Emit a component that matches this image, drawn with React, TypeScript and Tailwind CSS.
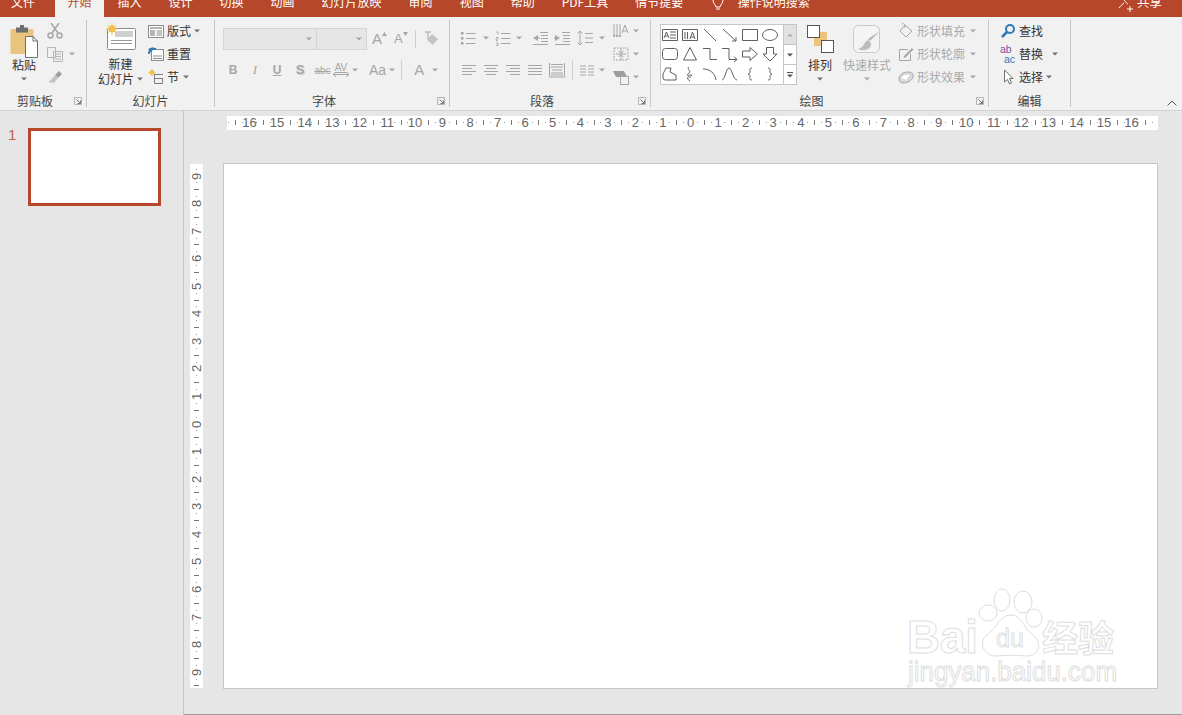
import type { ReactNode } from 'react'

const tabs = ['插入', '设计', '切换', '动画', '幻灯片放映', '审阅', '视图', '帮助', 'PDF工具', '情节提要']
const off = '#a6a6a6'

function Caret({ color = '#707070', className = '' }: { color?: string; className?: string }) {
  return (
    <svg width="6" height="4" viewBox="0 0 6 4" className={`shrink-0 ${className}`}>
      <path d="M0 0.5h6L3 3.5z" fill={color} />
    </svg>
  )
}

function Icon({ children, w = 16, h = 16, className = '' }: { children: ReactNode; w?: number; h?: number; className?: string }) {
  return (
    <svg width={w} height={h} viewBox={`0 0 ${w} ${h}`} fill="none" className={`shrink-0 ${className}`}>
      {children}
    </svg>
  )
}

function Launcher() {
  return (
    <div className="flex w-[16px] justify-center">
      <svg width="8" height="8" viewBox="0 0 8 8" fill="none">
        <path d="M0.5 7.5V0.5H7.5V7.5H0.5z" stroke="#b5b5b5" />
        <path d="M2.5 2.5L6.5 6.5M6.5 3.5V6.5H3.5" stroke="#777" />
      </svg>
    </div>
  )
}

function Group({ w, label, launcher, children }: { w: string; label: string; launcher?: boolean; children: ReactNode }) {
  return (
    <div className={`flex h-full shrink-0 ${w}`}>
      <div className="flex min-w-0 flex-1 flex-col">
        <div className="flex h-[75px]">{children}</div>
        <div className="flex h-[18px] items-center">
          <div className="flex-1 text-center text-[12px] leading-[18px] text-[#444]">{label}</div>
          {launcher && <Launcher />}
        </div>
      </div>
      <div className="mt-[3px] h-[87px] w-px bg-[#c6c6c6]" />
    </div>
  )
}

function Row({ children, className = '' }: { children: ReactNode; className?: string }) {
  return <div className={`flex h-[23px] items-center text-[12px] ${className}`}>{children}</div>
}

function Lines({ d }: { d: string }) {
  return <path d={d} stroke={off} />
}

function Paste() {
  return (
    <Icon w={28} h={33}>
      <rect x="0.5" y="4" width="23" height="25" rx="1.5" fill="#e9c47f" />
      <rect x="6" y="2.5" width="12" height="5" fill="#6f6f6f" />
      <rect x="10" y="0" width="4" height="4" fill="#6f6f6f" />
      <path d="M15.5 11.5H23L27.5 16V32.5H15.5z" fill="#fff" stroke="#6f6f6f" />
      <path d="M23 11.5V16H27.5" stroke="#6f6f6f" />
    </Icon>
  )
}

function NewSlide() {
  return (
    <Icon w={30} h={27}>
      <rect x="1.5" y="5.5" width="28" height="21" rx="1" fill="#fff" stroke="#8a8a8a" />
      <rect x="9" y="8" width="18" height="6" fill="#cfcfcf" />
      <path d="M5 17.5H26M5 20.5H26" stroke="#9a9a9a" />
      <circle cx="6" cy="6" r="3.5" fill="#f1c04d" />
      <path d="M6 0V12M0 6H12M2 2L10 10M10 2L2 10" stroke="#f1c04d" />
    </Icon>
  )
}

function Layout() {
  return (
    <Icon>
      <rect x="0.5" y="2.5" width="15" height="12" fill="#fff" stroke="#8a8a8a" />
      <rect x="2" y="4" width="12" height="2" fill="#b5b5b5" />
      <rect x="2" y="7" width="5" height="6" fill="#b5b5b5" />
      <path d="M8.5 8H14M8.5 10H14M8.5 12H14" stroke="#8a8a8a" />
    </Icon>
  )
}

function Reset() {
  return (
    <Icon>
      <rect x="3.5" y="3.5" width="12" height="11" fill="#fff" stroke="#8a8a8a" />
      <path d="M5 10H14M5 12.5H14" stroke="#8a8a8a" />
      <path d="M1 8C1 4 4 2 8 3" stroke="#2b79b8" strokeWidth="2" />
      <path d="M0 3L5 1L4 6z" fill="#2b79b8" />
    </Icon>
  )
}

function Section() {
  return (
    <Icon>
      <circle cx="4" cy="3.5" r="2.5" fill="#f1c04d" />
      <path d="M4 0V7M0.5 3.5H7.5" stroke="#f1c04d" />
      <path d="M6 5.5H15M6 9.5H15M6.5 5.5V14.5H14.5V9.5" stroke="#7d7d7d" />
    </Icon>
  )
}

function BulletIcon({ numbered }: { numbered?: boolean }) {
  return (
    <Icon>
      {numbered ? (
        <path d="M1 2h2v3M1 7.5h2v1.5h-2v1.5h2M1 13h2v1h-1M3 14v1.5H1" stroke={off} strokeWidth="0.8" />
      ) : (
        <path d="M1 2h2.5v2.5H1zM1 7h2.5v2.5H1zM1 12h2.5v2.5H1z" fill={off} />
      )}
      <Lines d="M6 3.5H15.5M6 8.5H15.5M6 13.5H15.5" />
    </Icon>
  )
}

function IndentIcon({ flip }: { flip?: boolean }) {
  return (
    <Icon>
      <Lines d="M8 2.5H16M9 5.5H16M9 8.5H16M9 11.5H16M1 14.5H16" />
      {flip ? <path d="M1 5V11L6 8z" fill={off} /> : <path d="M6 5V11L1 8z" fill={off} />}
      <path d={flip ? 'M0 8H3' : 'M4 8H8'} stroke={off} />
    </Icon>
  )
}

function AlignIcon({ d }: { d: string }) {
  return (
    <Icon>
      <Lines d={d} />
    </Icon>
  )
}

function Shape({ d, fill }: { d: string; fill?: string }) {
  return (
    <svg width="18" height="16" viewBox="0 0 18 16" fill="none">
      <path d={d} stroke="#5f5f5f" fill={fill} />
    </svg>
  )
}

const shapes: ReactNode[] = [
  <Shape key="a" d="M1.5 2.5H16.5V13.5H1.5zM9 5H15M9 8H15M9 11H15M3 11L5.5 5L8 11M4 9H7" />,
  <Shape key="b" d="M1.5 2.5H16.5V13.5H1.5zM4 5V12M6.5 5V12M9 12L11.5 5L14 12M10 10H13" />,
  <Shape key="c" d="M3 2L15 14" />,
  <Shape key="d" d="M2 2L15 14M15 10V14H11" />,
  <Shape key="e" d="M1.5 2.5H16.5V13.5H1.5z" />,
  <svg key="f" width="18" height="16" viewBox="0 0 18 16" fill="none"><ellipse cx="9" cy="8" rx="7.5" ry="5.5" stroke="#5f5f5f" /></svg>,
  <svg key="g" width="18" height="16" viewBox="0 0 18 16" fill="none"><rect x="1.5" y="2.5" width="15" height="11" rx="3" stroke="#5f5f5f" /></svg>,
  <Shape key="h" d="M9 1.5L15.5 14H2.5z" />,
  <Shape key="i" d="M2 2.5H9V13.5H16" />,
  <Shape key="j" d="M1 2.5H8V13.5H16M13 10.5L16 13.5L13 16" />,
  <Shape key="k" d="M1.5 5H9V1.5L16.5 8L9 14.5V11H1.5z" />,
  <Shape key="l" d="M5.5 1.5H12.5V8H16L9 15L2 8H5.5z" />,
  <Shape key="m" d="M2 8L5 2H10L9 6L15 9V14H4L2 13z" />,
  <Shape key="n" d="M8 1C5 3 11 5 8 7C5 9 6 10 9 9C12 8 10 12 8 11C6 10 6 14 9 15" />,
  <Shape key="o" d="M2 3C9 3 14 7 15 14" />,
  <Shape key="p" d="M1 14C4 14 5 2 8 2C11 2 12 14 16 14" />,
  <Shape key="q" d="M11 2C8 2 9 4 9 6C9 7 8 8 7 8C8 8 9 9 9 10C9 12 8 14 11 14" />,
  <Shape key="r" d="M7 2C10 2 9 4 9 6C9 7 10 8 11 8C10 8 9 9 9 10C9 12 10 14 7 14" />,
]

function Arrange() {
  return (
    <Icon w={27} h={28}>
      <rect x="7" y="7" width="13" height="14" fill="#ecc37b" />
      <rect x="0.5" y="0.5" width="12" height="12" fill="#fff" stroke="#555" />
      <rect x="14.5" y="15.5" width="12" height="12" fill="#fff" stroke="#555" />
    </Icon>
  )
}

function QuickStyle() {
  return (
    <Icon w={28} h={30}>
      <rect x="0.5" y="0.5" width="26" height="27" rx="5" fill="#f4f4f4" stroke="#c9c9c9" />
      <path d="M27 6L17 16L15 14z" fill="#b5b5b5" />
      <path d="M15 15C10 17 12 22 5 24C12 27 19 24 18 18z" fill="#bdbdbd" />
    </Icon>
  )
}

function GrayRow({ icon, text }: { icon: ReactNode; text: string }) {
  return (
    <Row className="text-[#a9a9a9]">
      {icon}
      <span className="ml-[3px] w-[50px]">{text}</span>
      <Caret color={off} className="ml-[3px]" />
    </Row>
  )
}

function HRuler() {
  const items = Array.from({ length: 135 }, (_, i) => i - 67)
  return (
    <div className="ml-[43px] flex h-[14px] w-[931px] items-center justify-center overflow-hidden bg-white pb-px pr-[4px]">
      {items.map(n => (
        <div key={n} className="flex h-full w-[6.9px] shrink-0 items-center justify-center">
          {n % 4 === 0 ? (
            <span className="shrink-0 font-['Liberation_Sans',sans-serif] text-[13px] leading-none text-[#666]">{Math.abs(n / 4)}</span>
          ) : n % 2 === 0 ? (
            <div className="h-[5px] w-px shrink-0 bg-[#777]" />
          ) : (
            <div className="h-px w-px shrink-0 bg-[#999]" />
          )}
        </div>
      ))}
    </div>
  )
}

function VRuler() {
  const items = Array.from({ length: 76 }, (_, i) => i - 37)
  return (
    <div className="mt-px flex h-[524px] w-[13px] shrink-0 flex-col items-center justify-center overflow-hidden bg-white pt-[3px]">
      {items.map(n => (
        <div key={n} className="flex h-[6.9px] w-full shrink-0 items-center justify-center">
          {n % 4 === 0 ? (
            <span className="shrink-0 -rotate-90 font-['Liberation_Sans',sans-serif] text-[13px] leading-none text-[#666]">{Math.abs(n / 4)}</span>
          ) : n % 2 === 0 ? (
            <div className="h-px w-[5px] shrink-0 bg-[#777]" />
          ) : (
            <div className="h-px w-px shrink-0 bg-[#999]" />
          )}
        </div>
      ))}
    </div>
  )
}

function Watermark() {
  const wm = { fill: '#fff', stroke: '#dedede', strokeWidth: 1 }
  return (
    <svg width="216" height="106" viewBox="0 0 216 106" className="absolute bottom-[-3px] right-[36px]">
      <text x="2" y="68" fontFamily="Liberation Sans" fontWeight="700" fontSize="46" textLength="71" lengthAdjust="spacingAndGlyphs" {...wm}>Bai</text>
      <ellipse cx="97" cy="15" rx="8" ry="11" {...wm} />
      <ellipse cx="118" cy="17" rx="9" ry="11" {...wm} />
      <ellipse cx="83" cy="28" rx="9" ry="8" {...wm} />
      <ellipse cx="129" cy="33" rx="8" ry="9" {...wm} />
      <path d="M106 30C94 30 92 44 82 50C72 58 80 72 92 71C100 70 112 70 120 71C134 72 138 58 128 50C118 44 118 30 106 30z" {...wm} />
      <text x="105" y="62" textAnchor="middle" fontFamily="Liberation Sans" fontSize="25" {...wm}>du</text>
      <text x="137" y="67" fontFamily="'Noto Sans CJK SC'" fontWeight="700" fontSize="36" {...wm}>经验</text>
      <text x="3" y="96" fontFamily="Liberation Sans" fontSize="27" textLength="209" lengthAdjust="spacingAndGlyphs" {...wm}>jingyan.baidu.com</text>
    </svg>
  )
}

export default function App() {
  return (
    <div className="flex h-[715px] w-[1182px] flex-col overflow-hidden bg-[#e6e6e6] font-['Noto_Sans_CJK_SC','Liberation_Sans',sans-serif] text-[12px] text-[#444]">
      {/* title tabs, cut off at the top of the window */}
      <div className="flex h-[17px] shrink-0 items-start overflow-hidden bg-[#b7472a] text-[12px] leading-[14px] text-white">
        <div className="-mt-[5px] pl-[11px] pr-[20px]">文件</div>
        <div className="flex h-[17px] items-start bg-[#f1f1f1] px-[12.5px] text-[#b7472a]">
          <span className="-mt-[5px]">开始</span>
        </div>
        {tabs.map(t => (
          <div key={t} className="-mt-[5px] whitespace-nowrap px-[13.5px]">{t}</div>
        ))}
        <svg width="16" height="12" viewBox="0 0 16 12" fill="none" className="ml-[13px]">
          <path d="M3 0C3 3 5 4 6 7H10C11 4 13 3 13 0M6 9H10" stroke="#fff" />
        </svg>
        <div className="-mt-[5px] ml-[12px]">操作说明搜索</div>
        <div className="ml-auto flex items-start pr-[20px]">
          <svg width="15" height="12" viewBox="0 0 15 12" fill="none">
            <path d="M1 8C3 5 4 5 6 3M6 0C8 2 9 4 10 4M9 9H15M12 6V12" stroke="#fff" />
          </svg>
          <span className="-mt-[5px] ml-[4px] text-[12.5px]">共享</span>
        </div>
      </div>

      {/* ribbon */}
      <div className="flex h-[94px] shrink-0 border-b border-[#d2d2d2] bg-[#f1f1f1]">
        <Group w="w-[87px]" label="剪贴板" launcher>
          <div className="flex w-[48px] flex-col items-center pt-[8px]">
            <Paste />
            <div className="mt-[-1px] leading-[15px] text-[#333]">粘贴</div>
            <Caret className="mt-[5px]" />
          </div>
          <div className="flex flex-col pt-[2px]">
            <Row>
              <Icon className="ml-[-1px]">
                <path d="M4 0L11 10M12 0L5 10" stroke="#a6a6a6" strokeWidth="1.5" />
                <circle cx="3.5" cy="12.5" r="2.5" stroke="#a6a6a6" strokeWidth="1.5" />
                <circle cx="12.5" cy="12.5" r="2.5" stroke="#a6a6a6" strokeWidth="1.5" />
              </Icon>
            </Row>
            <Row>
              <Icon className="ml-[-1px]">
                <path d="M0.5 1.5H8.5V11.5H0.5zM6.5 5.5H15.5V15.5H6.5zM8 8H14M8 10.5H14M8 13H14" stroke="#b5b5b5" />
              </Icon>
              <Caret color={off} className="ml-[6px]" />
            </Row>
            <Row>
              <Icon className="ml-[-1px]">
                <path d="M8 6L12 2L15 5L11 9z" fill="#9d9d9d" />
                <path d="M8 6L11 9L7 14L1 13C4 11 6 9 8 6z" fill="#c4c4c4" />
              </Icon>
            </Row>
          </div>
        </Group>

        <Group w="w-[128px]" label="幻灯片">
          <div className="ml-[9px] flex w-[49px] flex-col items-center pt-[6px]">
            <NewSlide />
            <div className="mt-[6px] leading-[15px] text-[#333]">新建</div>
            <div className="flex items-center leading-[15px] text-[#333]">
              <span className="whitespace-nowrap">幻灯片</span>
              <Caret className="ml-[3px]" />
            </div>
          </div>
          <div className="ml-[3px] flex flex-col pt-[2px] text-[#333]">
            <Row>
              <Layout />
              <span className="ml-[3px]">版式</span>
              <Caret className="ml-[3px]" />
            </Row>
            <Row>
              <Reset />
              <span className="ml-[3px]">重置</span>
            </Row>
            <Row>
              <Section />
              <span className="ml-[3px]">节</span>
              <Caret className="ml-[4px]" />
            </Row>
          </div>
        </Group>

        <Group w="w-[235px]" label="字体" launcher>
          <div className="flex flex-col pl-[8px] pt-[11px]">
            <div className="flex h-[22px] items-center text-[#a6a6a6]">
              <div className="flex h-full w-[94px] items-center justify-end border border-[#d4d4d4] bg-[#e6e6e6] pr-[4px]">
                <Caret color={off} />
              </div>
              <div className="flex h-full w-[50px] items-center justify-end border border-l-0 border-[#d4d4d4] bg-[#e6e6e6] pr-[4px]">
                <Caret color={off} />
              </div>
              <span className="relative ml-[5px] font-['Liberation_Sans',sans-serif] text-[15px]">A</span>
              <svg width="5" height="4" viewBox="0 0 5 4" className="mb-[10px]"><path d="M0 4H5L2.5 0z" fill={off} /></svg>
              <span className="ml-[7px] font-['Liberation_Sans',sans-serif] text-[13px]">A</span>
              <svg width="5" height="4" viewBox="0 0 5 4" className="mb-[10px]"><path d="M0 0H5L2.5 4z" fill={off} /></svg>
              <div className="ml-[7px] h-[18px] w-px bg-[#d0d0d0]" />
              <Icon className="ml-[7px]">
                <path d="M9 3L15 8L10 14L4 9z" fill="#c4c4c4" />
                <path d="M2 1H8M5 1V8" stroke={off} />
              </Icon>
            </div>
            <div className="mt-[9px] flex h-[22px] items-center font-['Liberation_Sans',sans-serif] text-[#a6a6a6]">
              <span className="ml-[-1px] w-[22px] text-center text-[12px] font-bold">B</span>
              <span className="w-[22px] text-center font-['Liberation_Serif',serif] text-[13px] italic">I</span>
              <span className="w-[22px] text-center text-[12px] font-bold underline">U</span>
              <span className="w-[24px] text-center text-[13px] font-bold [text-shadow:1px_1px_1px_#ccc]">S</span>
              <span className="w-[21px] text-center text-[10px] line-through">abc</span>
              <div className="ml-[-1px] flex w-[18px] flex-col items-center text-[10px] leading-[9px]">
                <span className="underline">AV</span>
                <svg width="16" height="5" viewBox="0 0 16 5" fill="none"><path d="M0 2.5H16M3 0L0 2.5L3 5M13 0L16 2.5L13 5" stroke={off} /></svg>
              </div>
              <Caret color={off} className="ml-[2px]" />
              <span className="ml-[11px] text-[14px]">Aa</span>
              <Caret color={off} className="ml-[3px]" />
              <div className="ml-[6px] h-[20px] w-px bg-[#d0d0d0]" />
              <span className="ml-[12px] text-[15px]">A</span>
              <Caret color={off} className="ml-[8px]" />
            </div>
          </div>
        </Group>

        <Group w="w-[201px]" label="段落" launcher>
          <div className="flex w-[160px] flex-col pt-[10px]">
            <div className="flex h-[22px] items-center pl-[10px]">
              <BulletIcon />
              <Caret color={off} className="ml-[7px]" />
              <div className="ml-[6px]"><BulletIcon numbered /></div>
              <Caret color={off} className="ml-[5px]" />
              <div className="ml-[10px]"><IndentIcon /></div>
              <div className="ml-[6px]"><IndentIcon flip /></div>
              <Icon className="ml-[7px]">
                <path d="M3 1V15M0.5 3.5L3 1L5.5 3.5M0.5 12.5L3 15L5.5 12.5M8 3.5H16M8 8H16M8 12.5H16" stroke={off} />
              </Icon>
              <Caret color={off} className="ml-[6px]" />
            </div>
            <div className="mt-[10px] flex h-[22px] items-center gap-[6px] pl-[11px]">
              <AlignIcon d="M1 3.5H15M1 6.5H11M1 9.5H15M1 12.5H11" />
              <AlignIcon d="M1 3.5H15M3 6.5H13M1 9.5H15M3 12.5H13" />
              <AlignIcon d="M1 3.5H15M5 6.5H15M1 9.5H15M5 12.5H15" />
              <AlignIcon d="M1 3.5H15M1 6.5H15M1 9.5H15M1 12.5H15" />
              <AlignIcon d="M0.5 1V15H15.5V1M2 2.5H14M2 5H14M2 11H14M2 13H14M3 8H13" />
              <div className="ml-px h-[20px] w-px bg-[#d0d0d0]" />
              <AlignIcon d="M1 4H7M9 4H15M1 7H7M9 7H15M1 10H7M9 10H15M1 13H7M9 13H15" />
              <Caret color={off} className="-ml-[2px]" />
            </div>
          </div>
          <div className="flex flex-col pl-[3px] pt-[2px]">
            <Row>
              <Icon>
                <path d="M1 1V14M4 1V14M7 1V14M0 12L1 14L2 12M3 12L4 14L5 12M6 12L7 14L8 12M9 10L12 2L15 10M10 8H14" stroke={off} />
              </Icon>
              <Caret color={off} className="ml-[4px]" />
            </Row>
            <Row>
              <Icon>
                <path d="M1 2H15V14H1z" stroke={off} strokeDasharray="2 1" />
                <path d="M8 2V7M5.5 5L8 7.5L10.5 5M8 14V9M5.5 11L8 8.5L10.5 11M3 8H13" stroke={off} />
              </Icon>
              <Caret color={off} className="ml-[4px]" />
            </Row>
            <Row>
              <Icon>
                <path d="M0 2H11L14 8H3z" fill="#9d9d9d" />
                <rect x="7.5" y="7.5" width="8" height="8" fill="#f1f1f1" stroke={off} />
              </Icon>
              <Caret color={off} className="ml-[4px]" />
            </Row>
          </div>
        </Group>

        <Group w="w-[338px]" label="绘图" launcher>
          <div className="ml-[9px] mt-[7px] flex h-[61px] w-[137px] border border-[#c6c6c6] bg-white">
            <div className="-ml-px mr-[3px] grid w-[120px] grid-cols-6 grid-rows-3">
              {shapes.map((s, i) => (
                <div key={i} className="flex items-center justify-center">{s}</div>
              ))}
            </div>
            <div className="flex flex-1 flex-col border-l border-[#c6c6c6]">
              <div className="flex flex-1 items-center justify-center bg-[#e2e2e2]">
                <svg width="6" height="4" viewBox="0 0 6 4"><path d="M0 3.5h6L3 0.5z" fill="#b0b0b0" /></svg>
              </div>
              <div className="flex flex-1 items-center justify-center border-y border-[#c6c6c6]">
                <Caret color="#555" />
              </div>
              <div className="flex flex-1 flex-col items-center justify-center gap-px">
                <div className="h-px w-[6px] bg-[#555]" />
                <Caret color="#555" />
              </div>
            </div>
          </div>
          <div className="ml-[2px] flex w-[42px] flex-col items-center pt-[8px]">
            <Arrange />
            <div className="mt-[4px] whitespace-nowrap leading-[15px] text-[#333]">排列</div>
            <Caret className="mt-[5px]" />
          </div>
          <div className="ml-[2px] flex w-[48px] flex-col items-center pt-[8px]">
            <QuickStyle />
            <div className="mt-[2px] whitespace-nowrap leading-[15px] text-[#a9a9a9]">快速样式</div>
            <Caret color={off} className="mt-[5px]" />
          </div>
          <div className="ml-[7px] flex flex-col pt-[2px]">
            <GrayRow
              text="形状填充"
              icon={
                <Icon>
                  <path d="M7 2L14 8L8 14L2 8z" stroke={off} />
                  <path d="M4 1C6 0 7 1 7 5" stroke={off} />
                </Icon>
              }
            />
            <GrayRow
              text="形状轮廓"
              icon={
                <Icon>
                  <path d="M1.5 3.5H10M1.5 3.5V14.5H12.5V8" stroke={off} />
                  <path d="M6 10L14 2L15.5 3.5L7.5 11.5L5.5 12z" fill={off} />
                </Icon>
              }
            />
            <GrayRow
              text="形状效果"
              icon={
                <Icon>
                  <path d="M1 10C1 6 5 3 10 3C14 3 16 5 15 8C14 12 9 14 5 14C2 14 1 12 1 10z" fill="#d8d8d8" stroke={off} />
                  <path d="M3 9C5 6 9 5 12 6L8 11z" fill="#fff" />
                </Icon>
              }
            />
          </div>
        </Group>

        <Group w="w-[82px]" label="编辑">
          <div className="flex flex-col pl-[11px] pt-[2px] text-[#333]">
            <Row>
              <Icon>
                <circle cx="10" cy="6" r="4" stroke="#2b79b8" strokeWidth="2" />
                <path d="M7 9L2 14" stroke="#2b79b8" strokeWidth="2.5" />
              </Icon>
              <span className="ml-[3px]">查找</span>
            </Row>
            <Row>
              <div className="flex w-[16px] flex-col font-['Liberation_Sans',sans-serif] text-[10.5px] leading-[10px]">
                <span className="text-[#7a4f9e]">ab</span>
                <span className="pl-[4px] text-[#2b79b8]">ac</span>
              </div>
              <span className="ml-[3px]">替换</span>
              <Caret className="ml-[9px]" />
            </Row>
            <Row>
              <Icon>
                <path d="M4.5 1V13L7.5 10.5L9.5 15L11.5 14L9.5 9.5H13z" fill="#fff" stroke="#6f6f6f" />
              </Icon>
              <span className="ml-[3px]">选择</span>
              <Caret className="ml-[3px]" />
            </Row>
          </div>
        </Group>

        <div className="flex flex-1 items-end justify-end pb-[4px] pr-[5px]">
          <svg width="10" height="6" viewBox="0 0 10 6" fill="none"><path d="M0.5 5.5L5 1L9.5 5.5" stroke="#555" /></svg>
        </div>
      </div>

      {/* slide panel and editing area */}
      <div className="flex min-h-0 flex-1">
        <div className="flex h-full w-[184px] shrink-0 items-start border-r border-[#c6c6c6] pl-[8px] pt-[17px]">
          <span className="w-[20px] font-['Liberation_Sans',sans-serif] text-[15px] leading-[14px] text-[#c0604a]">1</span>
          <div className="h-[78px] w-[133px] border-[3px] border-[#b7472a] bg-white" />
        </div>
        <div className="flex h-full flex-1 flex-col border-b border-[#9c9c9c] pt-[5px]">
          <HRuler />
          <div className="mt-[33px] flex items-start pl-[6px]">
            <VRuler />
            <div className="relative ml-[20px] h-[526px] w-[935px] border border-[#c6c6c6] bg-white">
              <Watermark />
            </div>
          </div>
        </div>
      </div>
    </div>
  )
}
